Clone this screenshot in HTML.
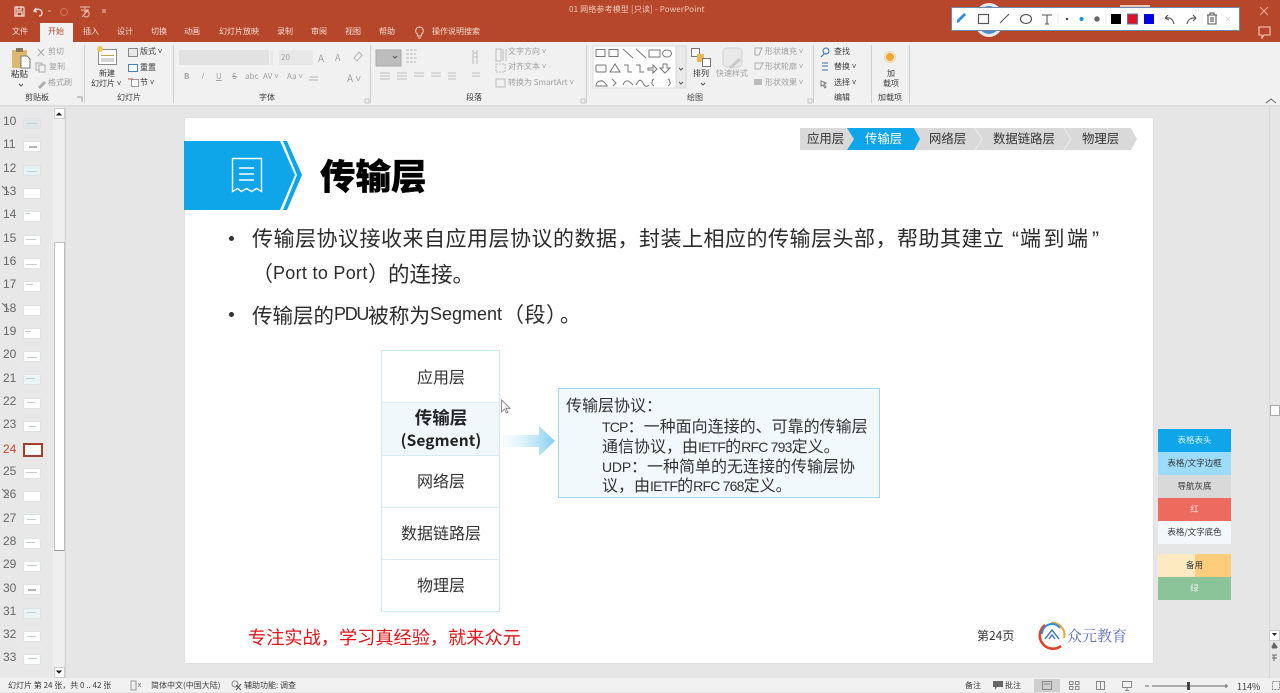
<!DOCTYPE html>
<html lang="zh-CN"><head><meta charset="utf-8"><title>PowerPoint</title>
<style>
html,body{margin:0;padding:0}
body{width:1280px;height:692px;position:relative;overflow:hidden;background:#e6e6e6;font-family:"Liberation Sans","Noto Sans CJK SC",sans-serif;color:#333}
div,span.t,svg.a{position:absolute}
.t{position:absolute;white-space:nowrap;line-height:1}
.cjk{font-family:"Noto Sans CJK SC","Liberation Sans",sans-serif}
.r{font-size:8px;color:#3c3c3c;font-family:"Noto Sans CJK SC",sans-serif;filter:blur(.25px)}
.g{color:#a0a0a0}
.tab{font-size:8px;color:#f6ddd5;top:28px;font-family:"Noto Sans CJK SC",sans-serif;filter:blur(.25px)}
.n{font-size:12px;color:#666;left:3px}
.th{left:24px;width:16px;height:9px;margin-top:-1px;background:#fff;box-shadow:0 0 0 .5px #dcdcdc}
.th i{position:absolute;display:block;background:#c3cfd6;height:1px}
.dv{top:45px;width:1px;height:58px;background:#cfcfcf}
.row{left:382px;width:118px;text-align:center;font-family:"Noto Sans CJK SC",sans-serif;color:#333}
.ln{left:382px;width:117px;height:1px;background:#d5ecf7}
.sw{left:1158px;width:73px;height:23px;font-size:8.5px;text-align:center;line-height:23px;font-family:"Noto Sans CJK SC",sans-serif}
.b{font-size:21px;color:#2b2b2b;font-family:"Noto Sans CJK SC","Liberation Sans",sans-serif}
.ll{font-family:"Liberation Sans",sans-serif;font-size:18px;color:#2b2b2b}
.dot{width:5px;height:5px;border-radius:50%;background:#333}
.c{font-size:16px;color:#333;left:602px;font-family:"Noto Sans CJK SC",sans-serif}
.c b{font-weight:normal;font-family:"Liberation Sans",sans-serif;font-size:14px;letter-spacing:-.8px}
</style></head><body>

<!-- title bar -->
<div style="left:0;top:0;width:1280px;height:42px;background:#b7472a"></div>
<svg class="a" style="left:0;top:0" width="120" height="22" viewBox="0 0 120 22">
<path d="M15 7h8l1 1v8H15zM17 7v3h4V7M17 16v-4h5v4" fill="none" stroke="#f5e3dc" stroke-width="1.2"/>
<path d="M36 8l-2 3 3 1M34 11c3-3 8-2 8 2 0 2-1 3-3 3" fill="none" stroke="#f5e3dc" stroke-width="1.3"/>
<path d="M48 11h3" stroke="#dca896" stroke-width="1"/>
<circle cx="64" cy="12" r="3.5" fill="none" stroke="#c9765c"/>
<path d="M80 7h10M85 7v2M81 10h8M82 17l6-7M84 12a3 3 0 1 1 0 4" fill="none" stroke="#e9c5b8"/>
<path d="M102 10h4M102 12h4" stroke="#e9c5b8"/>
</svg>
<span class="t" style="left:569px;top:6px;font-size:8px;color:#f3cdbf;letter-spacing:.15px;font-family:'Noto Sans CJK SC',sans-serif;filter:blur(.25px)">01 网络参考模型 [只读]  -  PowerPoint</span>
<div style="left:40px;top:23px;width:33px;height:19px;background:#f1f1f1"></div>
<span class="t tab" style="left:12px">文件</span>
<span class="t tab" style="left:48px;color:#b7472a">开始</span>
<span class="t tab" style="left:83px">插入</span>
<span class="t tab" style="left:117px">设计</span>
<span class="t tab" style="left:151px">切换</span>
<span class="t tab" style="left:184px">动画</span>
<span class="t tab" style="left:219px">幻灯片放映</span>
<span class="t tab" style="left:277px">录制</span>
<span class="t tab" style="left:311px">审阅</span>
<span class="t tab" style="left:345px">视图</span>
<span class="t tab" style="left:379px">帮助</span>
<svg class="a" style="left:414px;top:26px" width="11" height="13"><path d="M5.5 1a3.8 3.8 0 0 0-2 7v2h4V8a3.8 3.8 0 0 0-2-7zM4 12h3" fill="none" stroke="#f3d5ca"/></svg>
<span class="t tab" style="left:432px">操作说明搜索</span>

<!-- window controls -->
<div style="left:1120px;top:5px;width:30px;height:3px;background:#e8c9bd"></div>
<svg class="a" style="left:1255px;top:3px" width="20" height="36"><path d="M5 4l8 8M13 4l-8 8" stroke="#f0a58f" stroke-width="1.2"/><path d="M4 24h11v8H9l-2 3v-3H4z" fill="none" stroke="#f4ccbf" stroke-width="1.1"/></svg>

<!-- annotation toolbar -->
<div style="left:974px;top:3px;width:24px;height:28px;border:3px solid #e7ebf0;border-radius:50%;background:#4e8ad0"></div>
<div style="left:951px;top:7px;width:287px;height:22px;background:#fff;border:1px solid #6c86a8"></div>
<svg class="a" style="left:951px;top:7px" width="288" height="24" viewBox="951 7 288 24">
<path d="M957 23l2-1 7-7-2-2-7 7z" fill="#2a8fd8"/>
<rect x="978.500" y="14.500" width="10" height="9" fill="none" stroke="#555" stroke-width="1.2"/>
<path d="M1000 23l9-9" stroke="#555" stroke-width="1.1"/>
<ellipse cx="1026" cy="19" rx="5.500" ry="4.500" fill="none" stroke="#555" stroke-width="1.2"/>
<path d="M1042 15h10M1047 15v9M1045 24h4" fill="none" stroke="#555" stroke-width="1.1"/>
<path d="M1058 13v11M1106 13v11M1160 13v11M1202 13v11" stroke="#ececec"/>
<circle cx="1067" cy="19" r="1.200" fill="#444"/><circle cx="1081.500" cy="19" r="2" fill="#1e8fe0"/><circle cx="1097" cy="19" r="2.700" fill="#666"/>
<rect x="1111" y="14" width="10" height="10" fill="#000"/>
<rect x="1127.500" y="14" width="10" height="10" fill="#e01020" stroke="#5f79a6"/>
<rect x="1144" y="14" width="10" height="10" fill="#0000e0"/>
<path d="M1165 18l3-3M1165 18l4 2M1165 18c5-1 8 1 9 6" fill="none" stroke="#555" stroke-width="1.1"/>
<path d="M1196 18l-3-3M1196 18l-3 3M1196 18c-5-.5-8 1-9 6" fill="none" stroke="#555" stroke-width="1.1"/>
<path d="M1207 15h10M1210 15v-2h4v2M1208 15v9h8v-9M1211 17v5M1213 17v5" fill="none" stroke="#555" stroke-width="1.1"/>
<path d="M1226 17l4 4M1230 17l-4 4" stroke="#d8d8d8"/>
</svg>

<!-- ribbon -->
<div style="left:0;top:42px;width:1280px;height:63px;background:#f1f1f1"></div>
<div class="dv" style="left:84px"></div><div class="dv" style="left:173px"></div><div class="dv" style="left:370px"></div><div class="dv" style="left:586px"></div><div class="dv" style="left:813px"></div><div class="dv" style="left:871px"></div><div class="dv" style="left:909px"></div>

<svg class="a" style="left:0;top:42px" width="920" height="64" viewBox="0 42 920 64">
<!-- paste -->
<rect x="12" y="50" width="15" height="18" fill="#dcb96d"/><rect x="16" y="48" width="7" height="4" fill="#8a7a5d"/>
<path d="M21 56h6l3 3v9h-9z" fill="#fff" stroke="#777"/>
<path d="M38 49l6 7M44 49l-6 7" stroke="#aaa"/><rect x="36" y="63" width="6" height="7" fill="none" stroke="#aaa"/><rect x="39" y="65" width="6" height="7" fill="#f1f1f1" stroke="#aaa"/>
<path d="M38 87l6-6 2 2-6 6z" fill="#aaa"/>
<!-- new slide -->
<rect x="98.500" y="49.500" width="18" height="15" fill="#fff" stroke="#8a8a8a"/><rect x="101" y="55" width="13" height="1" fill="#c9a24e"/><rect x="101" y="58" width="13" height="4" fill="#d5d5d5"/>
<circle cx="100" cy="49" r="3" fill="#ecc85e"/>
<rect x="128.500" y="48.500" width="9" height="8" fill="#e8e8e8" stroke="#888"/>
<rect x="128.500" y="64.500" width="9" height="7" fill="#fff" stroke="#3e86b5"/>
<rect x="131.500" y="79.500" width="7" height="7" fill="#fff" stroke="#999"/><path d="M128 79h5" stroke="#c65a33"/>
<!-- font -->
<rect x="179" y="50" width="90" height="15" fill="#e2e2e2"/><rect x="270" y="50" width="3" height="15" fill="#e9e9e9"/>
<rect x="279" y="50" width="34" height="15" fill="#e8e8e8"/>
<path d="M354 58l5-6 3 3-5 6zM310 77h8M309 80h9" stroke="#b5b5b5" fill="none"/>
<rect x="376" y="50" width="25" height="16" fill="#bdbdbd" stroke="#a9a9a9"/>
<path d="M393 56l2 2 2-2" fill="none" stroke="#555"/>
<path d="M406 50h12M406 54h10M406 58h12M406 62h10" stroke="#b5b5b5" stroke-dasharray="3 1"/>
<path d="M380 73h10M380 76h10M380 79h10M397 73h10M397 76h10M397 79h10M414 73h10M414 76h10M431 73h10M431 76h10M448 73h8M448 76h8M448 79h8M472 73h8M472 76h8" stroke="#c0c0c0"/>
<path d="M473 50v14M477 50v14M474 53h3M474 57h3" stroke="#bbb"/>
<path d="M496 49h5v12h-5zM503 49v12M506 49v12" fill="none" stroke="#bbb"/>
<rect x="496" y="64" width="9" height="8" fill="none" stroke="#bbb" stroke-dasharray="2 1"/>
<rect x="496" y="79" width="9" height="8" fill="none" stroke="#bbb"/>
<!-- shapes gallery -->
<rect x="593" y="46" width="83" height="42" fill="#fff" stroke="#dcdcdc"/>
<rect x="676" y="46" width="10" height="42" fill="#eaeaea" stroke="#d5d5d5"/>
<g fill="none" stroke="#777">
<rect x="596" y="49.500" width="9" height="7"/><rect x="609" y="49.500" width="9" height="7"/>
<path d="M623 49l10 9M636 49l10 9"/>
<rect x="649" y="50" width="11" height="7"/><ellipse cx="667" cy="53.500" rx="4.500" ry="3.500"/>
<rect x="596" y="65" width="10" height="7" rx="1"/><path d="M610 72l5-8 5 8zM624 65h4v7h4M636 65h4v7h4"/>
<path d="M648 68h5v-3l4 4-4 4v-3h-5zM663 64h4v4h3l-5 5-5-5h3z"/>
<path d="M596 86c0-5 6-7 9-3s3 3 0 3zM612 79l4 4-3 3M623 85c2-5 5-6 10 0M636 85c3-6 5-6 7-2s4 4 6 2M654 79c-3 1-1 3-2 3.500s1 3 2 3.500M668 79c3 1 1 3 2 3.500s-1 3-2 3.500"/>
</g>
<path d="M679 68l2 2 2-2M679 82l2 2 2-2" fill="none" stroke="#555"/>
<!-- arrange -->
<rect x="691.500" y="48.500" width="8" height="8" fill="#fff" stroke="#777"/><rect x="697" y="54" width="7" height="8" fill="#e7b759"/><rect x="702.500" y="58.500" width="8" height="8" fill="#fff" stroke="#777"/>
<rect x="723" y="48" width="19" height="19" rx="4" fill="#e9e9e9" stroke="#d0d0d0"/><path d="M730 68l10-9" stroke="#c9c9c9" stroke-width="3"/>
<path d="M755 48h7l-3 7h-4zM755 63h8l-3 6h-5z" fill="none" stroke="#aaa"/><rect x="754" y="79" width="8" height="6" fill="#bbb"/>
<!-- edit -->
<circle cx="826" cy="51" r="3" fill="none" stroke="#2a6db0"/><path d="M824 54l-3 3" stroke="#2a6db0"/>
<path d="M822 63h6M822 66h6M822 70h6" stroke="#3d6fa8"/><path d="M821 81l5 2-2 1 2 3-1 1-2-3-2 1z" fill="#f8f8f8" stroke="#777"/>
<circle cx="890" cy="57" r="4" fill="#f6a530"/><circle cx="890" cy="57" r="5.500" fill="none" stroke="#f9d49a"/>
<path d="M77 97h5v5" fill="none" stroke="#9a9a9a"/>
<path d="M365 99h4v4h-4zM581 99h4v4h-4zM808 99h4v4h-4z" fill="none" stroke="#c5c5c5"/>
<path d="M19 84l2 2 2-2M701 83l2 2 2-2" fill="none" stroke="#555"/>
</svg>

<span class="t r g" style="left:48px;top:48px">剪切</span>
<span class="t r g" style="left:49px;top:63px">复制</span>
<span class="t r g" style="left:48px;top:79px">格式刷</span>
<span class="t r" style="left:11px;top:70px;color:#333;font-size:8.500px">粘贴</span>
<span class="t r" style="left:25px;top:94px">剪贴板</span>
<span class="t r" style="left:99px;top:70px">新建</span>
<span class="t r" style="left:91px;top:80px">幻灯片 ˅</span>
<span class="t r" style="left:140px;top:48px">版式 ˅</span>
<span class="t r" style="left:140px;top:64px">重置</span>
<span class="t r" style="left:140px;top:79px">节 ˅</span>
<span class="t r" style="left:117px;top:94px">幻灯片</span>
<span class="t r g" style="left:281px;top:54px">20</span>
<span class="t r g" style="left:318px;top:53px;font-size:10px">A</span>
<span class="t r g" style="left:335px;top:53px;font-size:9px">A</span>
<span class="t r g" style="left:184px;top:73px;font-weight:bold">B</span>
<span class="t r g" style="left:201px;top:73px;font-style:italic">I</span>
<span class="t r g" style="left:216px;top:73px;text-decoration:underline">U</span>
<span class="t r g" style="left:232px;top:73px;text-decoration:line-through">S</span>
<span class="t r g" style="left:245px;top:73px">abc</span>
<span class="t r g" style="left:263px;top:73px">AV ˅</span>
<span class="t r g" style="left:287px;top:73px">Aa ˅</span>
<span class="t r g" style="left:347px;top:73px;font-size:10px">A ˅</span>
<span class="t r" style="left:259px;top:94px">字体</span>
<span class="t r g" style="left:508px;top:48px">文字方向 ˅</span>
<span class="t r g" style="left:508px;top:63px">对齐文本 ˅</span>
<span class="t r g" style="left:508px;top:79px">转换为 SmartArt ˅</span>
<span class="t r" style="left:466px;top:94px">段落</span>
<span class="t r" style="left:693px;top:70px;color:#333">排列</span>
<span class="t r g" style="left:716px;top:70px">快速样式</span>
<span class="t r g" style="left:765px;top:48px">形状填充 ˅</span>
<span class="t r g" style="left:765px;top:63px">形状轮廓 ˅</span>
<span class="t r g" style="left:765px;top:79px">形状效果 ˅</span>
<span class="t r" style="left:687px;top:94px">绘图</span>
<span class="t r" style="left:834px;top:48px">查找</span>
<span class="t r" style="left:834px;top:63px">替换 ˅</span>
<span class="t r" style="left:834px;top:79px">选择 ˅</span>
<span class="t r" style="left:834px;top:94px">编辑</span>
<span class="t r" style="left:887px;top:70px">加</span>
<span class="t r" style="left:883px;top:80px">载项</span>
<span class="t r" style="left:878px;top:94px">加载项</span>
<svg class="a" style="left:1265px;top:97px" width="12" height="8"><path d="M1 6l5-4 5 4" fill="none" stroke="#666"/></svg>
<div style="left:0;top:105px;width:1280px;height:2px;background:#dedede"></div>

<!-- thumbnails panel -->
<div style="left:0;top:107px;width:53px;height:571px;background:#e8e8e8"></div>
<div style="left:53px;top:107px;width:11px;height:571px;background:#efefef"></div>
<div style="left:65px;top:107px;width:1px;height:571px;background:#d3d3d3"></div>
<div style="left:54px;top:242px;width:9px;height:307px;background:#fff;border:1px solid #bdbdbd;border-bottom-color:#999"></div>
<div style="left:54px;top:108px;width:9px;height:9px;background:#fff;border:1px solid #ccc"></div>
<div style="left:54px;top:667px;width:9px;height:9px;background:#fff;border:1px solid #ccc"></div>
<svg class="a" style="left:54px;top:108px" width="10" height="570"><path d="M3 7l2-2 2 2zM3 563l2 2 2-2z" fill="#222" stroke="#222"/></svg>

<span class="t n" style="top:115px">10</span><div class="th" style="top:120px;background:#dfe7ea"><i style="left:3px;top:4px;width:10px"></i></div>
<span class="t n" style="top:138px">11</span><div class="th" style="top:143px"><i style="left:5px;top:4px;width:8px;height:2px;background:#b5b5b5"></i></div>
<span class="t n" style="top:162px">12</span><div class="th" style="top:167px;background:#e4f3f5"><i style="left:3px;top:5px;width:10px"></i></div>
<span class="t n" style="top:185px">13</span><div class="th" style="top:190px"></div>
<span class="t n" style="top:208px">14</span><div class="th" style="top:213px"><i style="left:1px;top:1px;width:5px"></i></div>
<span class="t n" style="top:232px">15</span><div class="th" style="top:237px"><i style="left:2px;top:3px;width:10px"></i></div>
<span class="t n" style="top:255px">16</span><div class="th" style="top:260px"><i style="left:2px;top:5px;width:11px"></i></div>
<span class="t n" style="top:278px">17</span><div class="th" style="top:283px"><i style="left:2px;top:2px;width:7px"></i></div>
<span class="t n" style="top:302px">18</span><div class="th" style="top:307px"></div>
<span class="t n" style="top:325px">19</span><div class="th" style="top:330px"><i style="left:1px;top:2px;width:6px"></i></div>
<span class="t n" style="top:348px">20</span><div class="th" style="top:353px"><i style="left:3px;top:5px;width:10px"></i></div>
<span class="t n" style="top:372px">21</span><div class="th" style="top:376px;background:#eaf5f7"><i style="left:2px;top:3px;width:9px"></i></div>
<span class="t n" style="top:395px">22</span><div class="th" style="top:400px"><i style="left:3px;top:3px;width:8px"></i></div>
<span class="t n" style="top:418px">23</span><div class="th" style="top:423px"><i style="left:5px;top:4px;width:7px"></i></div>
<span class="t n" style="top:443px;color:#c0492e">24</span>
<div style="left:23px;top:443px;width:16px;height:10px;background:#fff;border:2px solid #a5412a"></div>
<span class="t n" style="top:465px">25</span><div class="th" style="top:470px"><i style="left:2px;top:3px;width:11px"></i></div>
<span class="t n" style="top:488px">26</span><div class="th" style="top:493px"></div>
<span class="t n" style="top:512px">27</span><div class="th" style="top:516px"><i style="left:3px;top:4px;width:9px"></i></div>
<span class="t n" style="top:535px">28</span><div class="th" style="top:540px"><i style="left:2px;top:3px;width:9px"></i></div>
<span class="t n" style="top:558px">29</span><div class="th" style="top:563px"><i style="left:3px;top:3px;width:10px"></i></div>
<span class="t n" style="top:582px">30</span><div class="th" style="top:586px"><i style="left:4px;top:4px;width:8px;height:2px;background:#b5b5b5"></i></div>
<span class="t n" style="top:605px">31</span><div class="th" style="top:610px;background:#e9f5f6"><i style="left:3px;top:3px;width:9px"></i></div>
<span class="t n" style="top:628px">32</span><div class="th" style="top:633px"><i style="left:3px;top:4px;width:9px"></i></div>
<span class="t n" style="top:651px">33</span><div class="th" style="top:656px"><i style="left:4px;top:3px;width:9px"></i></div>
<svg class="a" style="left:0;top:180px" width="16" height="320" viewBox="0 180 16 320"><path d="M2 186l7 7M2 303l7 7M2 489l7 7" stroke="#777"/></svg>

<!-- slide -->
<div style="left:185px;top:118px;width:968px;height:545px;background:#fff;box-shadow:0 0 1px #c9c9c9"></div>
<svg class="a" style="left:184px;top:141px" width="120" height="70" viewBox="184 141 120 70">
<path d="M184 141h96l15 34-15 35h-96z" fill="#0ea5e9"/>
<path d="M283 141h4l15 34-15 35h-4l14-35z" fill="#0ea5e9"/>
<path d="M232.500 158.500h29v33l-5-3-5 3-5-3-5 3-4-3-5 3z" fill="none" stroke="#fff" stroke-width="1.400"/>
<path d="M239 168h15M239 174h15M239 180h15" stroke="#fff" stroke-width="1.400"/>
</svg>
<span class="t cjk" style="left:320px;top:157px;font-size:35.500px;font-weight:900;color:#000;-webkit-text-stroke:.3px #000">传输层</span>

<!-- breadcrumb -->
<svg class="a" style="left:800px;top:128px" width="340" height="23" viewBox="800 128 340 23">
<path d="M800 128h331l6 11-6 11H800z" fill="#d9d9d9"/>
<path d="M847 128h67l6 11-6 11h-67l7-11z" fill="#0ea5e9"/>
<path d="M975 128l7 11-7 11M1064 128l7 11-7 11" fill="none" stroke="#e9e9e9" stroke-width="1.200"/>
</svg>
<span class="t cjk" style="left:807px;top:132px;font-size:12.400px;color:#333">应用层</span>
<span class="t cjk" style="left:865px;top:132px;font-size:12.400px;color:#fff">传输层</span>
<span class="t cjk" style="left:929px;top:132px;font-size:12.400px;color:#333">网络层</span>
<span class="t cjk" style="left:993px;top:132px;font-size:12.400px;color:#333">数据链路层</span>
<span class="t cjk" style="left:1082px;top:132px;font-size:12.400px;color:#333">物理层</span>

<!-- body text -->
<div class="dot" style="left:229px;top:236px"></div>
<span class="t b" style="left:252px;top:228px;letter-spacing:.5px">传输层协议接收来自应用层协议的数据，封装上相应的传输层头部，帮助其建立</span>
<span class="t ll" style="left:1012px;top:229px;font-size:21px">“</span>
<span class="t b" style="left:1020px;top:228px;letter-spacing:2.500px">端到端</span>
<span class="t ll" style="left:1092px;top:229px;font-size:21px">”</span>

<span class="t b" style="left:252px;top:263px">（</span>
<span class="t ll" style="left:273px;top:264px;font-size:18px;letter-spacing:.3px">Port to Port</span>
<span class="t b" style="left:368px;top:263px">）</span>
<span class="t b" style="left:388px;top:263px;font-size:21.500px">的连接。</span>

<div class="dot" style="left:229px;top:312px"></div>
<span class="t b" style="left:252px;top:304px;font-size:20.500px">传输层的</span>
<span class="t ll" style="left:334px;top:305px;letter-spacing:-1.300px">PDU</span>
<span class="t b" style="left:368px;top:304px;font-size:20.700px">被称为</span>
<span class="t ll" style="left:430px;top:305px">Segment</span>
<span class="t b" style="left:503px;top:304px;letter-spacing:.5px">（段）</span>
<span class="t b" style="left:560px;top:304px">。</span>

<!-- stack -->
<div style="left:381px;top:350px;width:117px;height:260px;border:1px solid #cfe8f5;background:#fff"></div>
<div style="left:382px;top:402px;width:117px;height:53px;background:#f0f8fc"></div>
<div class="ln" style="top:402px"></div>
<div class="ln" style="top:455px"></div>
<div class="ln" style="top:507px"></div>
<div class="ln" style="top:559px"></div>
<span class="t row" style="top:368px;font-size:16px">应用层</span>
<span class="t row" style="top:409px;font-size:17.500px;font-weight:bold;color:#222">传输层</span>
<span class="t row" style="top:433px;font-size:15.500px;font-weight:bold;color:#222;letter-spacing:.1px">(Segment)</span>
<span class="t row" style="top:472px;font-size:16px">网络层</span>
<span class="t row" style="top:524px;font-size:16px">数据链路层</span>
<span class="t row" style="top:576px;font-size:16px">物理层</span>
<svg class="a" style="left:500px;top:398px" width="60" height="60" viewBox="500 398 60 60">
<defs><linearGradient id="ar" x1="0" x2="1" y1="0" y2="0"><stop offset="0" stop-color="#e6f5fc" stop-opacity=".2"/><stop offset="1" stop-color="#7fcdf0"/></linearGradient></defs>
<path d="M501 435h38v-9l16 15-16 15v-9h-38z" fill="url(#ar)"/>
<path d="M501.500 400l0 12 3-3 2 4 1.500-.7-2-4 4 0z" fill="#fff" stroke="#777" stroke-width=".8"/>
</svg>

<!-- callout -->
<div style="left:558px;top:388px;width:320px;height:108px;background:#f2f9fd;border:1px solid #9fd8f0"></div>
<span class="t c" style="left:566px;top:396px">传输层协议：</span>
<span class="t c" style="top:417px"><b>TCP</b>：一种面向连接的、可靠的传输层</span>
<span class="t c" style="top:437px">通信协议，由<b>IETF</b>的<b>RFC 793</b>定义。</span>
<span class="t c" style="top:457px"><b style="letter-spacing:-.2px">UDP</b>：一种简单的无连接的传输层协</span>
<span class="t c" style="top:476px">议，由<b>IETF</b>的<b>RFC 768</b>定义。</span>

<!-- footer -->
<span class="t cjk" style="left:248px;top:628px;font-size:18.200px;color:#e1161a">专注实战，学习真经验，就来众元</span>
<span class="t cjk" style="left:977px;top:630px;font-size:12px;color:#333">第24页</span>
<svg class="a" style="left:1037px;top:620px" width="30" height="30" viewBox="0 0 30 30">
<path d="M8 5a12 12 0 0 0 16 21" fill="none" stroke="#e5402a" stroke-width="2.600"/>
<path d="M14 3a12 12 0 0 1 13 15" fill="none" stroke="#e9a73a" stroke-width="2"/>
<path d="M5 14a10 10 0 0 1 18-6" fill="none" stroke="#2a8fd8" stroke-width="2"/>
<path d="M8 19l7-9 7 9M12 19l3-4 3 4" fill="none" stroke="#3a6fc0" stroke-width="1.400"/>
</svg>
<span class="t" style="left:1067px;top:628px;font-size:15px;color:#5a6cc0;font-family:'Noto Serif CJK SC',serif">众元教育</span>

<!-- palette -->
<div class="sw" style="top:429px;background:#0ea5e9;color:#dff3fc">表格表头</div>
<div class="sw" style="top:452px;background:#9ddcf8;color:#333">表格/文字边框</div>
<div class="sw" style="top:475px;background:#d9d9d9;color:#333">导航灰底</div>
<div class="sw" style="top:498px;background:#ec6a5e;color:#fbe3df">红</div>
<div class="sw" style="top:521px;background:#f3f8fc;color:#333">表格/文字底色</div>
<div class="sw" style="top:554px;background:linear-gradient(90deg,#fdeac0 0,#fdeac0 37px,#fdcd7c 37px);color:#333">备用</div>
<div class="sw" style="top:577px;background:#8cc49a;color:#e7f5ea">绿</div>

<!-- right scrollbar -->
<div style="left:1269px;top:107px;width:1px;height:571px;background:#d8d8d8"></div>
<div style="left:1270px;top:405px;width:8px;height:9px;background:#fff;border:1px solid #aaa"></div>
<div style="left:1269px;top:630px;width:9px;height:9px;background:#fff;border:1px solid #ccc"></div>
<svg class="a" style="left:1270px;top:630px" width="10" height="34"><path d="M2 3l2.500 3 2.500-3z" fill="#222"/><path d="M4 13l-2 4h5zM2 18h5M2 25h5M2 28h5M4 25v6" stroke="#666" fill="#666"/></svg>

<!-- status bar -->
<div style="left:0;top:678px;width:1280px;height:14px;background:#f1f1f1"></div>
<span class="t r" style="left:8px;top:682px">幻灯片 第 24 张，共 0 .. 42 张</span>
<svg class="a" style="left:130px;top:680px" width="12" height="11"><path d="M1 1h5v9H1zM8 3l3 4M11 3l-3 4" fill="none" stroke="#999"/></svg>
<span class="t r" style="left:151px;top:682px">简体中文(中国大陆)</span>
<svg class="a" style="left:231px;top:680px" width="12" height="11"><circle cx="4" cy="4" r="3" fill="none" stroke="#888"/><path d="M5 5l5 5M10 4l-5 6" stroke="#555"/></svg>
<span class="t r" style="left:244px;top:682px">辅助功能: 调查</span>
<span class="t r" style="left:965px;top:682px">备注</span>
<svg class="a" style="left:993px;top:681px" width="11" height="10"><path d="M0 0h10v6H4L2 9V6H0z" fill="#666"/></svg>
<span class="t r" style="left:1005px;top:682px">批注</span>
<div style="left:1034px;top:679px;width:26px;height:13px;background:#cfcfcf"></div>
<svg class="a" style="left:1040px;top:680px" width="240" height="12" viewBox="1040 680 240 12">
<g fill="none" stroke="#888">
<rect x="1042.500" y="681.500" width="9" height="8"/><path d="M1044 684h6"/>
<rect x="1069.500" y="681.500" width="3.500" height="3"/><rect x="1075.500" y="681.500" width="3.500" height="3"/><rect x="1069.500" y="686.500" width="3.500" height="3"/><rect x="1075.500" y="686.500" width="3.500" height="3"/>
<path d="M1096.500 681.500h8v8h-8zM1100.500 681.500v8"/>
<path d="M1122.500 681.500h9v6h-9zM1127 687.500v3M1125 690.500h4"/>
<rect x="1272.500" y="681.500" width="7" height="8" stroke-dasharray="2 1"/>
</g>
<path d="M1145 686h4M1152 686h74M1224 686h4M1226 684v4" stroke="#666"/>
<rect x="1187" y="682" width="3" height="8" fill="#444"/>
</svg>
<span class="t r" style="left:1237px;top:682px;font-size:9px">114%</span>
</body></html>
